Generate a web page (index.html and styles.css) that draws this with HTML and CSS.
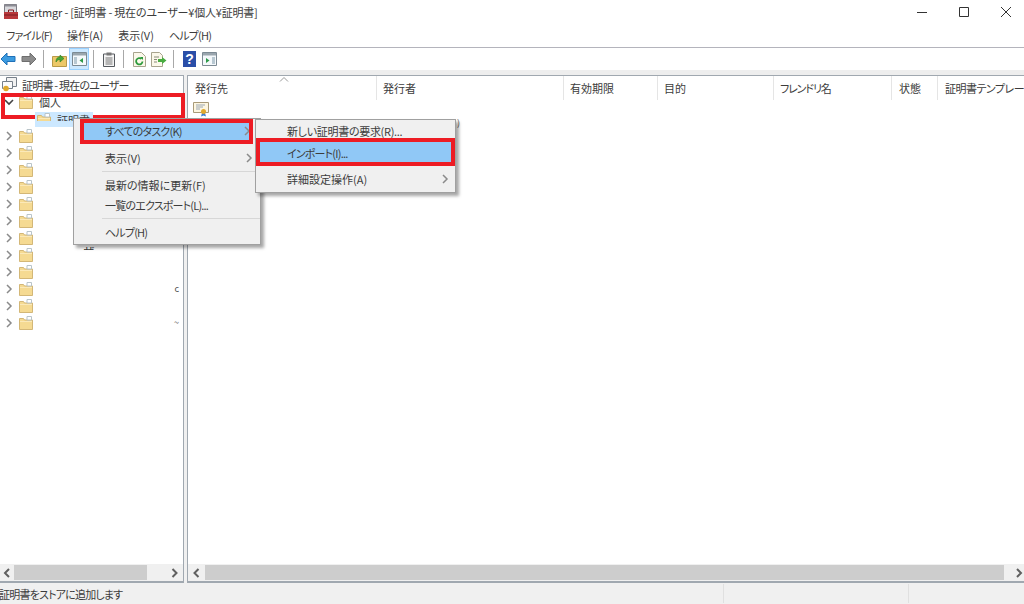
FILE: index.html
```html
<!DOCTYPE html>
<html lang="ja">
<head>
    <meta charset="UTF-8">
    <title>certmgr</title>
    <link rel="stylesheet" href="styles.css">
</head>
<body>
    <svg class="defs" width="0" height="0">
        <symbol id="folder" viewBox="0 0 14 14">
            <path d="M.5 2.500h4l1 1.500h8v9.500H.5z" fill="#f5da92" stroke="#d3b777"/>
            <path d="M8 .5h4.500V4H8z" fill="#fff" stroke="#b9c4c9"/>
            <path d="M1 5h12v1H1z" fill="#fbe9b8"/>
        </symbol>
        <symbol id="chev" viewBox="0 0 8 10">
            <path d="M2 1l4 4-4 4" fill="none" stroke="#8a8a8a" stroke-width="1.500"/>
        </symbol>
        <symbol id="scroll-right" viewBox="0 0 8 10">
            <path d="M2 1l4 4-4 4" fill="none" stroke="#606060" stroke-width="2"/>
        </symbol>
        <symbol id="scroll-left" viewBox="0 0 8 10">
            <path d="M6 1L2 5l4 4" fill="none" stroke="#606060" stroke-width="2"/>
        </symbol>
        <symbol id="cert" viewBox="0 0 16 16">
            <path d="M.5 1.500h15v10H.5z" fill="#fdf6e0" stroke="#a89a78"/>
            <path d="M3 4h9M3 6h7M3 8h4" stroke="#9aa7b5"/>
            <path d="M9 12l-1 3.500 2.500-1 2.500 1-1-3.500z" fill="#3f7fd0"/>
            <circle cx="10.500" cy="10.500" r="2.500" fill="#e0a92c"/>
        </symbol>
    </svg>

    <div class="app">
        <header class="titlebar">
            <svg class="app-icon" width="16" height="16" viewBox="0 0 16 16">
                <path d="M1.500.5h12v10h-12z" fill="#d8d8dc" stroke="#7c7c84"/>
                <path d="M1.500.5h12v2h-12z" fill="#8c8c94"/>
                <path d="M1 8h14v7H1z" fill="#b8383c"/>
                <path d="M5.500 8V6h5v2" fill="none" stroke="#7a1c20"/>
                <path d="M1 11h14" stroke="#7a1c20"/>
            </svg>
            <span class="title-text">certmgr - [証明書 - 現在のユーザー¥個人¥証明書]</span>
            <div class="window-buttons">
                <svg width="10" height="10" viewBox="0 0 10 10"><path d="M0 5.500h10" stroke="#333"/></svg>
                <svg width="10" height="10" viewBox="0 0 10 10"><path d="M.5.500h9v9h-9z" fill="none" stroke="#333"/></svg>
                <svg width="10" height="10" viewBox="0 0 10 10"><path d="M0 0l10 10M10 0L0 10" stroke="#333"/></svg>
            </div>
        </header>

        <nav class="menubar">
            <span class="tight">ファイル(F)</span>
            <span>操作(A)</span>
            <span>表示(V)</span>
            <span class="tight">ヘルプ(H)</span>
        </nav>

        <div class="toolbar">
            <button class="tool">
                <svg width="16" height="14" viewBox="0 0 16 14"><path d="M7 1L1 7l6 6V9.500h8v-5H7z" fill="#3c9be0" stroke="#1f70b8"/></svg>
            </button>
            <button class="tool">
                <svg width="16" height="14" viewBox="0 0 16 14"><path d="M9 1l6 6-6 6V9.500H1v-5h8z" fill="#8c8c8c" stroke="#6e6e6e"/></svg>
            </button>
            <i class="tool-sep"></i>
            <button class="tool">
                <svg width="15" height="15" viewBox="0 0 15 15"><path d="M.5 4.500h14v10H.5z" fill="#ecc868" stroke="#b89a48"/><path d="M4 10c0-4 2-5 4-5V3l4 3.500L8 10V7.500c-2 0-3 1-4 2.500z" fill="#48a838" stroke="#2c7c20" stroke-width=".6"/></svg>
            </button>
            <button class="tool pressed">
                <svg width="15" height="14" viewBox="0 0 15 14"><path d="M.5.500h14v13H.5z" fill="#f4f8fb" stroke="#7c8a94"/><path d="M1 1h13v2.500H1z" fill="#9aa6ae"/><path d="M2 5h3v7H2z" fill="#b8c8d2"/><path d="M11 6v5L7.500 8.500z" fill="#2c9a48"/></svg>
            </button>
            <i class="tool-sep"></i>
            <button class="tool">
                <svg width="14" height="15" viewBox="0 0 14 15"><path d="M1.500 2h11v12.500h-11z" fill="#f4f4f4" stroke="#55595e"/><path d="M4.500.500h5v3h-5z" fill="#777"/><path d="M3.500 6h7M3.500 8h7M3.500 10h7M3.500 12h7" stroke="#777"/></svg>
            </button>
            <i class="tool-sep"></i>
            <button class="tool">
                <svg width="15" height="15" viewBox="0 0 15 15"><path d="M1.500.500h8l4 4v10h-12z" fill="#fbf8ea" stroke="#a8a48e"/><path d="M10.500 9.500a3.200 3.200 0 1 1-1-2.600" fill="none" stroke="#2c9a3c" stroke-width="1.800"/><path d="M8 5h3v3z" fill="#2c9a3c"/></svg>
            </button>
            <button class="tool">
                <svg width="16" height="15" viewBox="0 0 16 15"><path d="M.5.500h8l3 3v11H.5z" fill="#fbf8ea" stroke="#a8a48e"/><path d="M3 5h5M3 7.500h3M3 10h3" stroke="#8a8a7a"/><path d="M7 7h4V5l4.500 3.500L11 12v-2H7z" fill="#48ac40"/></svg>
            </button>
            <i class="tool-sep"></i>
            <button class="tool">
                <svg width="13" height="16" viewBox="0 0 13 16"><path d="M0 0h13v16H0z" fill="#2a4ea8"/><text x="6.500" y="13" class="help-mark">?</text></svg>
            </button>
            <button class="tool">
                <svg width="15" height="14" viewBox="0 0 15 14"><path d="M.5.500h14v13H.5z" fill="#f4f8fb" stroke="#7c8a94"/><path d="M1 1h13v2.500H1z" fill="#9aa6ae"/><path d="M10 5h3v7h-3z" fill="#b8c8d2"/><path d="M4 6v5l3.500-2.500z" fill="#2c9a48"/></svg>
            </button>
        </div>

        <div class="toolbar-gap"></div>

        <main class="panes">
            <section class="pane tree-pane">
                <div class="pane-body tree">
                    <div class="row root-row">
                        <svg width="15" height="15" viewBox="0 0 15 15"><path d="M4.500.500h10v9h-10z" fill="#f2f2f2" stroke="#77808a"/><path d="M.5 4.500h10v7h-10z" fill="#fbfbfb" stroke="#77808a"/><circle cx="4" cy="11.500" r="2.800" fill="#e0a92c"/></svg>
                        <span class="tight">証明書 - 現在のユーザー</span>
                    </div>
                    <div class="row lvl1">
                        <svg class="twist" width="10" height="8" viewBox="0 0 10 8"><path d="M1 2l4 4 4-4" fill="none" stroke="#444" stroke-width="1.600"/></svg>
                        <svg class="folder"><use href="#folder"/></svg>
                        <span>個人</span>
                    </div>
                    <div class="row lvl2">
                        <div class="selected">
                            <div class="selected-clip">
                                <svg class="folder"><use href="#folder"/></svg>
                                <span>証明書</span>
                            </div>
                        </div>
                    </div>
                    <div class="row lvl1"><svg class="twist"><use href="#chev"/></svg><svg class="folder"><use href="#folder"/></svg></div>
                    <div class="row lvl1"><svg class="twist"><use href="#chev"/></svg><svg class="folder"><use href="#folder"/></svg></div>
                    <div class="row lvl1"><svg class="twist"><use href="#chev"/></svg><svg class="folder"><use href="#folder"/></svg></div>
                    <div class="row lvl1"><svg class="twist"><use href="#chev"/></svg><svg class="folder"><use href="#folder"/></svg></div>
                    <div class="row lvl1"><svg class="twist"><use href="#chev"/></svg><svg class="folder"><use href="#folder"/></svg></div>
                    <div class="row lvl1"><svg class="twist"><use href="#chev"/></svg><svg class="folder"><use href="#folder"/></svg></div>
                    <div class="row lvl1"><svg class="twist"><use href="#chev"/></svg><svg class="folder"><use href="#folder"/></svg></div>
                    <div class="row lvl1"><svg class="twist"><use href="#chev"/></svg><svg class="folder"><use href="#folder"/></svg><span class="stub">ーザー</span></div>
                    <div class="row lvl1"><svg class="twist"><use href="#chev"/></svg><svg class="folder"><use href="#folder"/></svg></div>
                    <div class="row lvl1"><svg class="twist"><use href="#chev"/></svg><svg class="folder"><use href="#folder"/></svg><span class="trace">c</span></div>
                    <div class="row lvl1"><svg class="twist"><use href="#chev"/></svg><svg class="folder"><use href="#folder"/></svg></div>
                    <div class="row lvl1"><svg class="twist"><use href="#chev"/></svg><svg class="folder"><use href="#folder"/></svg><span class="trace">~</span></div>
                </div>
                <div class="hscroll">
                    <svg class="arrow arrow-first"><use href="#scroll-left"/></svg>
                    <div class="thumb left-thumb"></div>
                    <svg class="arrow arrow-end"><use href="#scroll-right"/></svg>
                </div>
            </section>

            <section class="pane list-pane">
                <div class="list-head">
                    <span class="col col-to">発行先<svg class="sort" width="10" height="5" viewBox="0 0 10 5"><path d="M1 4.500l4-4 4 4" fill="none" stroke="#999"/></svg></span>
                    <span class="col col-by">発行者</span>
                    <span class="col col-exp">有効期限</span>
                    <span class="col col-use">目的</span>
                    <span class="col col-name tighter">フレンドリ名</span>
                    <span class="col col-state">状態</span>
                    <span class="col col-tmpl">証明書テンプレート</span>
                </div>
                <div class="pane-body list">
                    <svg class="cert-icon"><use href="#cert"/></svg>
                    <div class="list-trace">)</div>
                </div>
                <div class="hscroll">
                    <svg class="arrow"><use href="#scroll-left"/></svg>
                    <div class="thumb"></div>
                    <svg class="arrow arrow-last"><use href="#scroll-right"/></svg>
                </div>
            </section>
        </main>

        <footer class="statusbar">
            <span class="status-text tight">証明書をストアに追加します</span>
            <i class="status-sep"></i>
            <span class="status-cell"></span>
            <i class="status-sep"></i>
        </footer>

        <div class="mark mark-tree"></div>

        <ul class="menu main-menu">
            <li class="item active"><span class="tight">すべてのタスク(K)</span><svg class="more"><use href="#chev"/></svg></li>
            <li class="sep hidden-sep"></li>
            <li class="item">表示(V)<svg class="more"><use href="#chev"/></svg></li>
            <li class="sep"></li>
            <li class="item">最新の情報に更新(F)</li>
            <li class="item"><span class="tight">一覧のエクスポート(L)...</span></li>
            <li class="sep"></li>
            <li class="item"><span class="tight">ヘルプ(H)</span></li>
        </ul>

        <ul class="menu sub-menu">
            <li class="item"><span class="slight">新しい証明書の要求(R)...</span></li>
            <li class="item active"><span class="tight">インポート(I)...</span></li>
            <li class="sep hidden-sep"></li>
            <li class="item">詳細設定操作(A)<svg class="more"><use href="#chev"/></svg></li>
        </ul>

        <div class="mark mark-tasks"></div>
        <div class="mark mark-import"></div>
    </div>
</body>
</html>
```

FILE: styles.css
```css
html, body {
    margin: 0;
    height: 100%;
    overflow: hidden;
}
body {
    font-family: "Noto Sans CJK JP", "Noto Sans", sans-serif;
    font-size: 11px;
    font-feature-settings: "palt";
    color: #3c3c3c;
    background-color: #fff;
}
/* kana in the reference's UI font run narrower than in Noto */
.slight {
    letter-spacing: -0.3px;
}
.tight {
    letter-spacing: -0.8px;
}
.tighter {
    letter-spacing: -1.1px;
}
.defs {
    position: absolute;
}
.app {
    position: relative;
    display: flex;
    flex-direction: column;
    height: 604px;
}
.titlebar {
    display: flex;
    align-items: center;
    height: 25px;
    padding: 0 13px 1px 3px;
    box-sizing: border-box;
}
.app-icon {
    margin-right: 4px;
}
.title-text {
    flex: 1;
    letter-spacing: -0.2px;
}
.window-buttons {
    display: flex;
    gap: 32px;
}
.menubar {
    display: flex;
    align-items: center;
    gap: 15px;
    height: 23px;
    padding: 0 0 2px 6px;
    box-sizing: border-box;
    border-bottom: 1px solid #b4b4bc;
}
.toolbar {
    display: flex;
    align-items: center;
    height: 22px;
    margin-left: -1px;
}
.tool {
    display: flex;
    align-items: center;
    justify-content: center;
    width: 20px;
    height: 22px;
    padding: 0;
    border: 1px solid transparent;
    background: none;
}
.tool:first-child svg {
    margin-left: -2px;
}
.tool.pressed {
    background-color: #cce8ff;
    border-color: #99d1ff;
}
.tool-sep {
    width: 1px;
    height: 18px;
    margin: 0 5px 0 4px;
    background-color: #a8a8a8;
}
.help-mark {
    font-family: "Liberation Sans", sans-serif;
    font-size: 14px;
    font-weight: bold;
    fill: #fff;
    text-anchor: middle;
}
.toolbar-gap {
    height: 5px;
    background-color: #eee;
}
.panes {
    display: flex;
    flex: 1;
    min-height: 0;
    gap: 3px;
    background-color: #f0f0f0;
}
.pane {
    display: flex;
    flex-direction: column;
    min-width: 0;
    background-color: #fff;
    border: solid #a0a8b0;
    border-width: 1px 1px 2px 1px;
}
.tree-pane {
    width: 183px;
    border-left: 0;
}
.list-pane {
    flex: 1;
    border-right: 0;
}
.pane-body {
    flex: 1;
    min-height: 0;
}
.row {
    display: flex;
    align-items: center;
    height: 17px;
    white-space: nowrap;
}
.root-row {
    padding-left: 2px;
}
.root-row span {
    margin-left: 5px;
}
.lvl1 {
    padding-left: 4px;
}
.lvl1 span {
    margin-left: 6px;
}
.lvl2 {
    padding-left: 35px;
    align-items: flex-end;
}
.twist {
    width: 10px;
    height: 10px;
    flex: none;
    margin-right: 5px;
}
.folder {
    width: 14px;
    height: 14px;
    flex: none;
}
/* the selected row was painted over the first red box in the source picture */
.selected {
    position: relative;
    z-index: 2;
    width: 58px;
    height: 15px;
    padding-left: 2px;
    box-sizing: border-box;
    background-color: #cce8ff;
}
.selected-clip {
    display: flex;
    height: 9px;
    overflow: hidden;
    padding-top: 1px;
    box-sizing: border-box;
}
.selected-clip span {
    margin-left: 6px;
    line-height: 14px;
}
.lvl1 .trace {
    margin-left: auto;
    margin-right: 4px;
    font-size: 9px;
    color: #555;
}
.lvl1 .stub {
    height: 3px;
    overflow: hidden;
    margin: -13px 0 0 40px;
    line-height: 9px;
}
.hscroll {
    display: flex;
    align-items: center;
    height: 17px;
    background-color: #f0f0f0;
}
.arrow {
    flex: none;
    width: 17px;
    height: 10px;
    padding: 0 4px;
    box-sizing: border-box;
}
.arrow-first {
    width: 14px;
    padding: 0 3px;
}
.arrow-end {
    margin-left: auto;
}
.arrow-last {
    width: 20px;
    padding: 0 1px 0 11px;
}
.thumb {
    flex: 1;
    height: 15px;
    background-color: #cdcdcd;
}
.left-thumb {
    flex: none;
    width: 133px;
}
.list-head {
    display: flex;
    height: 24px;
    align-items: stretch;
}
.col {
    position: relative;
    display: flex;
    align-items: center;
    flex: none;
    padding-left: 7px;
    box-sizing: border-box;
    border-right: 1px solid #e5e5e5;
    white-space: nowrap;
}
.col-to { width: 189px; }
.col-by { width: 187px; padding-left: 6px; }
.col-exp { width: 94px; padding-left: 6px; }
.col-use { width: 116px; padding-left: 6px; }
.col-name { width: 118px; padding-left: 6px; }
.col-state { width: 46px; }
.col-tmpl { flex: 1; border-right: 0; overflow: hidden; letter-spacing: -0.5px; }
.sort {
    position: absolute;
    left: 91px;
    top: 1px;
}
.list {
    padding: 1px 0 0 5px;
}
.cert-icon {
    display: block;
    width: 16px;
    height: 16px;
}
.list-trace {
    margin: -1px 0 0 264px;
    font-size: 9px;
    color: #555;
}
.statusbar {
    display: flex;
    align-items: center;
    height: 21px;
    flex: none;
    background-color: #f0f0f0;
}
.status-text {
    width: 724px;
    margin-left: -1px;
    flex: none;
}
.status-cell {
    width: 184px;
    flex: none;
}
.status-sep {
    width: 1px;
    height: 19px;
    background-color: #e0e0e0;
}

/* context menus sit over the panes */
.menu {
    position: absolute;
    z-index: 3;
    margin: 0;
    padding: 2px 0;
    list-style: none;
    box-sizing: border-box;
    background-color: #f0f0f0;
    border: 1px solid #a0a0a0;
    box-shadow: 3px 3px 3px rgba(0, 0, 0, 0.35);
}
.main-menu {
    left: 73px;
    top: 118px;
    width: 188px;
}
.sub-menu {
    left: 255px;
    top: 119px;
    width: 201px;
    padding-top: 0;
}
.item {
    position: relative;
    display: flex;
    align-items: center;
    height: 20px;
    padding-left: 31px;
}
.main-menu .item.active {
    margin: 0 9px 0 10px;
    padding-left: 21px;
}
.sub-menu .item {
    height: 22px;
}
.active {
    background-color: #90c8f6;
}
.more {
    position: absolute;
    right: 6px;
    top: 50%;
    width: 8px;
    height: 10px;
    margin-top: -5px;
}
.main-menu .more {
    right: 7px;
}
.main-menu .active .more {
    right: 0;
}
.sep {
    height: 1px;
    margin: 3px 0 3px 28px;
    background-color: #d7d7d7;
}
.sub-menu .sep {
    margin: 2px 0 1px 28px;
}
.hidden-sep {
    background-color: transparent;
}
.mark {
    position: absolute;
    z-index: 4;
    box-sizing: border-box;
    border: 4px solid #ed1c24;
}
.mark-tree {
    z-index: 1;
    left: 1px;
    top: 93px;
    width: 184px;
    height: 26px;
}
.mark-tasks {
    left: 80px;
    top: 119px;
    width: 173px;
    height: 25px;
}
.mark-import {
    left: 256px;
    top: 138px;
    width: 199px;
    height: 28px;
}
```
